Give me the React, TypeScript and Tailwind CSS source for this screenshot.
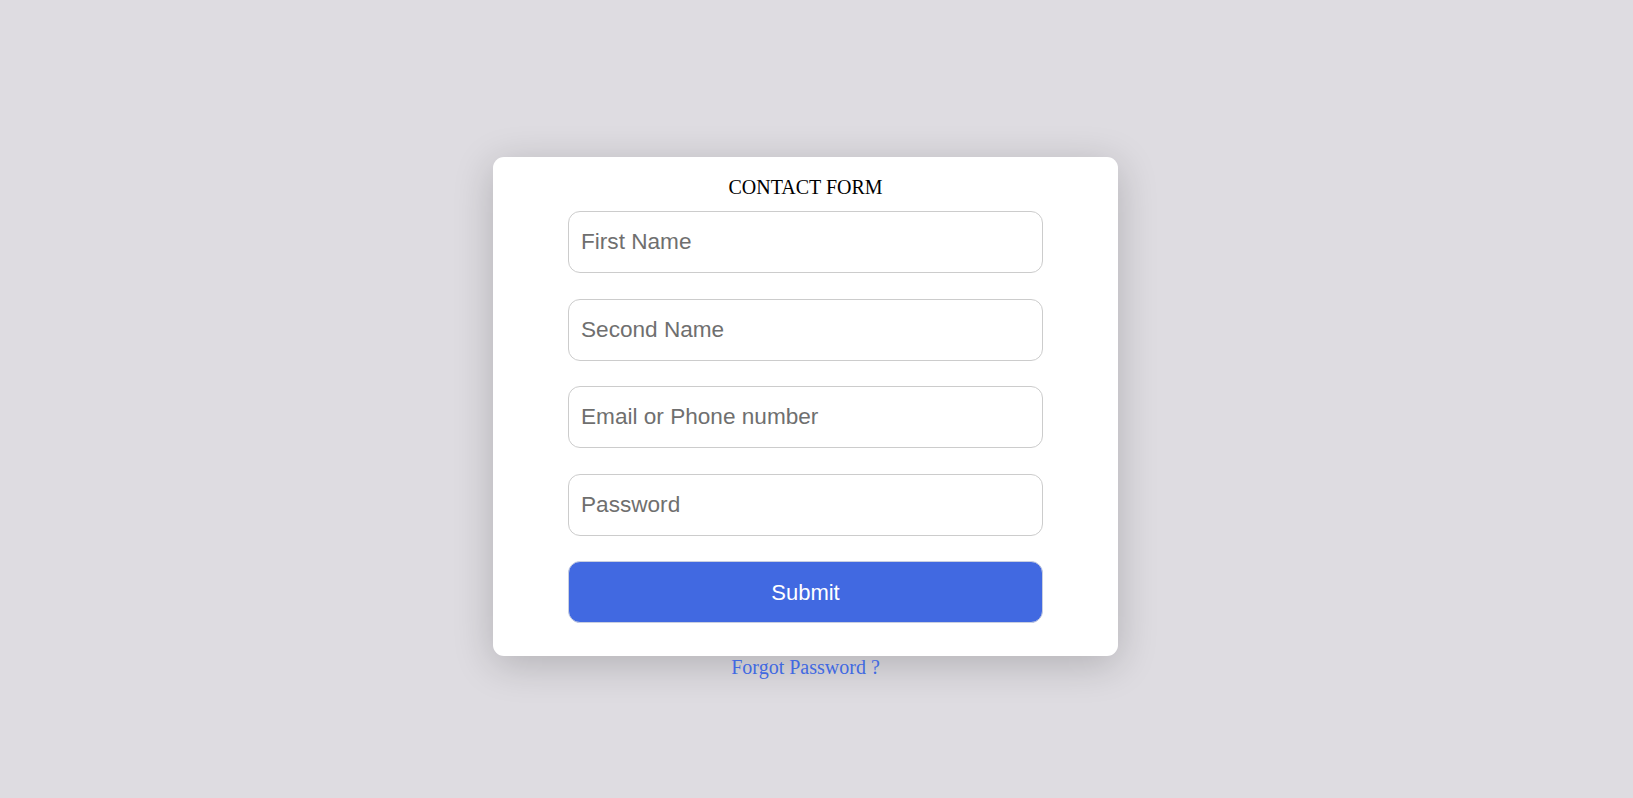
import React from 'react';

const fields = ['First Name', 'Second Name', 'Email or Phone number', 'Password'];

const App = () => {
  return (
    <div className="min-h-screen w-full bg-[#dedce1] pt-[157px]">
      <div className="ml-[493px] w-[625px] flex flex-col items-center">
        <form
          className="w-full h-[499px] bg-white rounded-[11px] shadow-[0_8px_40px_rgba(0,0,0,0.2)] flex flex-col items-center pt-[18px]"
          onSubmit={(e) => e.preventDefault()}
        >
          <h1 className="text-[20px] leading-[24px] text-black font-['Liberation_Serif',serif] mb-[12px]">
            CONTACT FORM
          </h1>
          <div className="flex flex-col gap-[25.5px] w-[475px]">
            {fields.map((f) => (
              <input
                key={f}
                type={f === 'Password' ? 'password' : 'text'}
                placeholder={f}
                className="h-[62px] w-full rounded-[12px] border border-[#cccccc] px-[12px] text-[22.6px] font-['Liberation_Sans',Arial,sans-serif] text-[#333] placeholder:text-[#6f6f6f] outline-none"
              />
            ))}
            <button
              type="submit"
              className="h-[62px] w-full rounded-[12px] border border-[#c9cfe0] bg-[#4169e1] text-white text-[22px] font-['Liberation_Sans',Arial,sans-serif]"
            >
              Submit
            </button>
          </div>
        </form>
        <a href="#" className="mt-[0px] text-[20px] leading-[22px] text-[#4169e1] font-['Liberation_Serif',serif]">
          Forgot Password ?
        </a>
      </div>
    </div>
  );
};

export default App;
